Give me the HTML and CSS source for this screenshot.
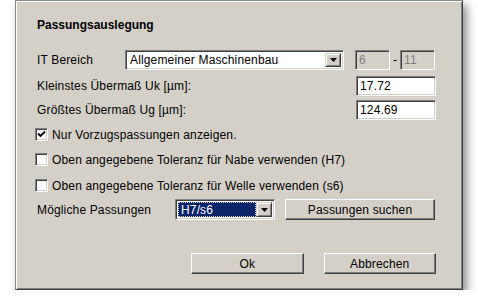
FILE: index.html
```html
<!DOCTYPE html>
<html lang="de">
<head>
<meta charset="utf-8">
<title>Passungsauslegung</title>
<link rel="stylesheet" href="styles.css">
</head>
<body>
<div class="dialog">
  <div class="title">Passungsauslegung</div>

  <div class="row row-it">
    <span class="label label-it">IT Bereich</span>
    <div class="combo combo-wide">
      <span class="combo-text">Allgemeiner Maschinenbau</span>
      <span class="combo-btn"><svg width="7" height="4" viewBox="0 0 7 4"><path d="M0 0h7L3.5 4z" fill="#000"/></svg></span>
    </div>
    <div class="range">
      <span class="field field-small disabled">6</span>
      <span class="dash">-</span>
      <span class="field field-small disabled">11</span>
    </div>
  </div>

  <div class="row row-uk">
    <span class="label">Kleinstes Übermaß Uk [µm]:</span>
    <span class="field field-val">17.72</span>
  </div>

  <div class="row row-ug">
    <span class="label">Größtes Übermaß Ug [µm]:</span>
    <span class="field field-val">124.69</span>
  </div>

  <div class="row check check-1">
    <span class="box"><svg width="9" height="9" viewBox="0 0 9 9"><path d="M1 3.5 L3.5 6 L8 1.5" fill="none" stroke="#000" stroke-width="1.8"/></svg></span>
    <span class="check-label">Nur Vorzugspassungen anzeigen.</span>
  </div>

  <div class="row check check-2">
    <span class="box"></span>
    <span class="check-label">Oben angegebene Toleranz für Nabe verwenden (H7)</span>
  </div>

  <div class="row check check-3">
    <span class="box"></span>
    <span class="check-label">Oben angegebene Toleranz für Welle verwenden (s6)</span>
  </div>

  <div class="row row-fits">
    <span class="label label-fits">Mögliche Passungen</span>
    <div class="combo combo-fit">
      <span class="combo-text selected"><span class="sel-inner">H7/s6</span></span>
      <span class="combo-btn"><svg width="7" height="4" viewBox="0 0 7 4"><path d="M0 0h7L3.5 4z" fill="#000"/></svg></span>
    </div>
    <span class="btn btn-search">Passungen suchen</span>
  </div>

  <div class="row row-buttons">
    <span class="btn btn-ok">Ok</span>
    <span class="btn btn-cancel">Abbrechen</span>
  </div>
</div>
</body>
</html>
```

FILE: styles.css
```css
html, body {
  margin: 0;
  padding: 0;
  background: #ffffff;
}

body {
  padding-left: 15px;
  font-family: "Liberation Sans", Arial, sans-serif;
  font-size: 12px;
  letter-spacing: 0.15px;
  color: #000;
}

.dialog {
  box-sizing: border-box;
  width: 448px;
  height: 290px;
  background: #d4d0c8;
  border: 1px solid;
  border-color: #8a8a8a #404040 #404040 #8a8a8a;
  box-shadow: inset 1px 1px 0 #ffffff, inset -1px -1px 0 #808080, 4px 5px 9px rgba(0, 0, 0, 0.45);
  padding: 17px 26px 0 19px;
  display: flex;
  flex-direction: column;
}

.title {
  font-weight: bold;
  line-height: 14px;
  height: 14px;
  padding-left: 2px;
  letter-spacing: 0;
}

.row {
  display: flex;
  align-items: center;
}

.label {
  padding-left: 2px;
  white-space: nowrap;
}

.row-it {
  margin-top: 18px;
  height: 20px;
}

.label-it {
  width: 88px;
}

.combo {
  box-sizing: border-box;
  height: 20px;
  background: #ffffff;
  border: 1px solid;
  border-color: #808080 #ffffff #ffffff #808080;
  box-shadow: inset 1px 1px 0 #404040, inset -1px -1px 0 #d4d0c8;
  display: flex;
  align-items: stretch;
  padding: 2px;
}

.combo-wide {
  width: 219px;
}

.combo-text {
  flex: 1;
  padding-left: 2px;
  line-height: 14px;
  white-space: nowrap;
  overflow: hidden;
}

.combo-btn {
  box-sizing: border-box;
  width: 16px;
  background: #d4d0c8;
  border: 1px solid;
  border-color: #d4d0c8 #404040 #404040 #d4d0c8;
  box-shadow: inset 1px 1px 0 #ffffff, inset -1px -1px 0 #808080;
  display: flex;
  align-items: center;
  justify-content: center;
}

.range {
  margin-left: 11px;
  display: flex;
  align-items: center;
}

.field {
  box-sizing: border-box;
  height: 20px;
  background: #ffffff;
  border: 1px solid;
  border-color: #808080 #ffffff #ffffff #808080;
  box-shadow: inset 1px 1px 0 #404040, inset -1px -1px 0 #d4d0c8;
  padding: 2px 3px;
  line-height: 15px;
  white-space: nowrap;
}

.field-small {
  width: 35px;
}

.disabled {
  background: #d4d0c8;
  color: #808080;
}

.dash {
  width: 10px;
  text-align: center;
}

.field-val {
  width: 80px;
  margin-left: auto;
}

.row-uk {
  margin-top: 6px;
  height: 20px;
}

.row-ug {
  margin-top: 4px;
  height: 20px;
}

.check {
  height: 13px;
}

.check-1 {
  margin-top: 8px;
}

.check-2 {
  margin-top: 12px;
}

.check-3 {
  margin-top: 13px;
}

.box {
  box-sizing: border-box;
  width: 13px;
  height: 13px;
  background: #ffffff;
  border: 1px solid;
  border-color: #808080 #ffffff #ffffff #808080;
  box-shadow: inset 1px 1px 0 #404040, inset -1px -1px 0 #d4d0c8;
  display: flex;
  align-items: center;
  justify-content: center;
}

.check-label {
  margin-left: 4px;
  white-space: nowrap;
}

.row-fits {
  margin-top: 7px;
  height: 21px;
}

.label-fits {
  width: 138px;
}

.combo-fit {
  width: 100px;
  height: 21px;
}

.selected {
  background: #0a246a;
  color: #ffffff;
  padding: 0;
  outline: 1px dotted #d4d0c8;
  outline-offset: -1px;
  display: flex;
  align-items: center;
}

.sel-inner {
  padding-left: 3px;
}

.btn {
  box-sizing: border-box;
  height: 21px;
  background: #d4d0c8;
  border: 1px solid;
  border-color: #ffffff #404040 #404040 #ffffff;
  box-shadow: inset -1px -1px 0 #808080;
  display: flex;
  align-items: center;
  justify-content: center;
  white-space: nowrap;
}

.btn-search {
  width: 150px;
  margin-left: 10px;
}

.row-buttons {
  margin-top: 33px;
  height: 21px;
  padding-left: 156px;
}

.btn-ok {
  width: 120px;
}

.btn-cancel {
  width: 120px;
  margin-left: 20px;
}
```
